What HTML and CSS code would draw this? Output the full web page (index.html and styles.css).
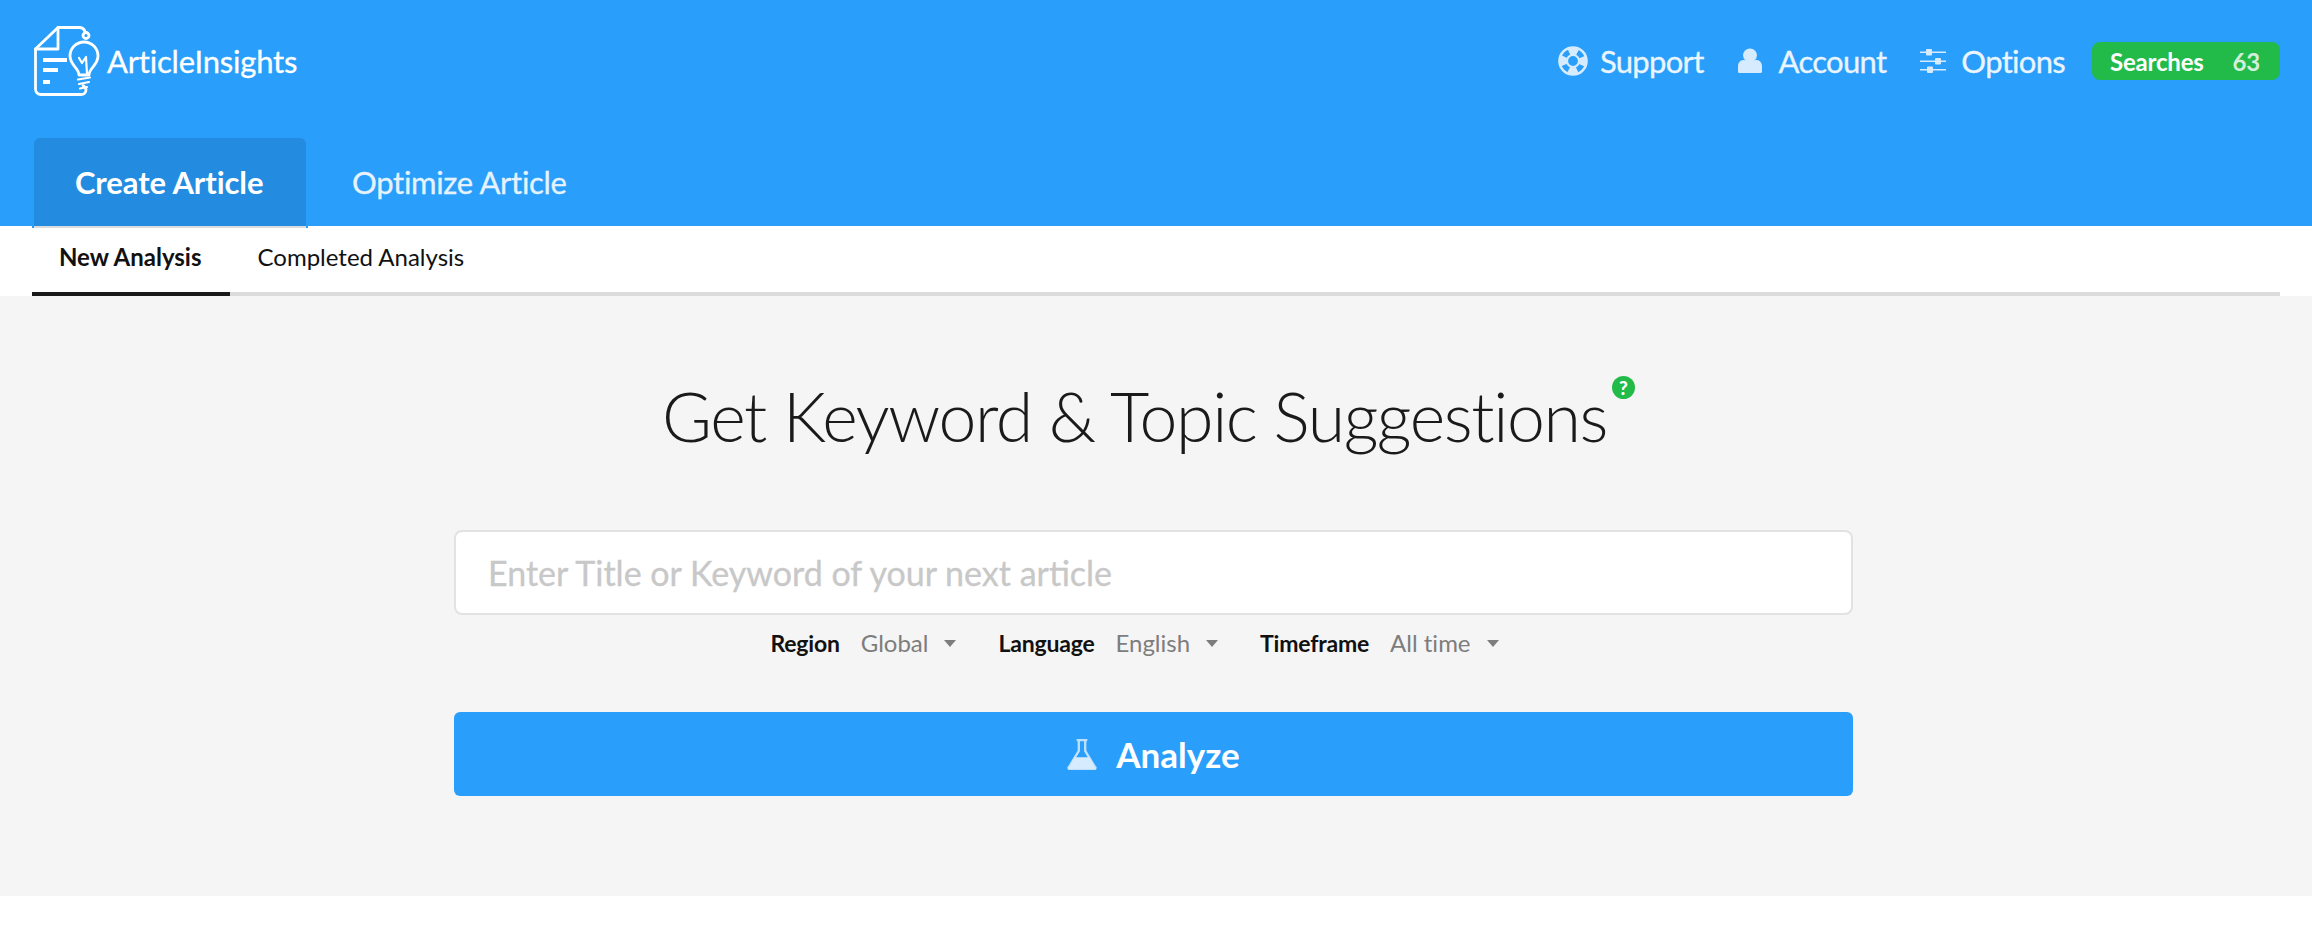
FILE: index.html
```html
<!DOCTYPE html>
<html lang="en">
<head>
    <meta charset="UTF-8">
    <title>ArticleInsights</title>
    <link rel="stylesheet" href="styles.css">
</head>
<body>

    <header class="topbar">
        <div class="topbar-row">
            <a class="logo" href="#">
                <svg class="logo-icon" viewBox="0 0 66 70" fill="none" stroke="#fff" stroke-width="2.800" stroke-linecap="round" stroke-linejoin="round">
                    <path d="M45 1.500H24L1.500 23V63a5.500 5.500 0 0 0 5.500 5.500H47c3 0 5-2 5-4.500s-1.500-3.500-3-4.500"/>
                    <path d="M24 1.500V23H1.500"/>
                    <path d="M45 1.500c3 0 5 1 6 4"/>
                    <circle cx="52" cy="9.500" r="3"/>
                    <path d="M45 49C45 42 36 39 36 30A14 14 0 0 1 64 30C64 39 55 42 55 49Z"/>
                    <path d="M44 53.500l12-2M45 58l10-2M46 62.500l7-1.500M45 32l3 5 4-6 1 17" stroke-width="2.200"/>
                    <path d="M9 34H33M9 44H24M9 56H16" stroke-width="4.200" stroke-linecap="butt"/>
                </svg>
                <span>ArticleInsights</span>
            </a>
            <nav class="top-nav">
                <a href="#">
                    <svg class="icon-support" viewBox="0 0 30 30" fill="none" stroke="#d6ebfe">
                        <circle cx="15" cy="15" r="9.500" stroke-width="8" stroke-dasharray="8.500 6.430" stroke-dashoffset="4.250"/>
                        <circle cx="15" cy="15" r="13.500" stroke-width="2.600"/>
                        <circle cx="15" cy="15" r="6" stroke-width="2.200"/>
                    </svg>
                    Support
                </a>
                <a href="#">
                    <svg class="icon-account" viewBox="0 0 26 28" fill="#d6ebfe">
                        <circle cx="13" cy="8" r="7.500"/>
                        <path d="M1 27a2 2 0 0 1-1-2v-5c0-5 3-7 7-7 2 2 10 2 12 0 4 0 7 2 7 7v5a2 2 0 0 1-1 2z"/>
                    </svg>
                    Account
                </a>
                <a href="#">
                    <svg class="icon-options" viewBox="0 0 26 24" fill="#d6ebfe">
                        <path d="M0 2.500h26v1.600H0zM0 11.500h26v1.600H0zM0 20h26v1.600H0z"/>
                        <rect x="6" y="0" width="6" height="6.500" rx="1"/>
                        <rect x="15" y="9" width="6" height="6.500" rx="1"/>
                        <rect x="7" y="17.500" width="6" height="6.500" rx="1"/>
                    </svg>
                    Options
                </a>
                <div class="searches">
                    <span class="searches-label">Searches</span>
                    <span class="searches-count">63</span>
                </div>
            </nav>
        </div>
        <div class="main-tabs">
            <a class="main-tab active" href="#">Create Article</a>
            <a class="main-tab" href="#">Optimize Article</a>
        </div>
    </header>

    <div class="sub-tabs">
        <a class="sub-tab active" href="#">New Analysis</a>
        <a class="sub-tab" href="#">Completed Analysis</a>
    </div>

    <main class="analysis">
        <h1 class="analysis-title">
            <span>Get Keyword &amp; Topic Suggestions</span>
            <span class="help-badge">?</span>
        </h1>

        <div class="analysis-form">
            <input class="keyword-input" type="text" placeholder="Enter Title or Keyword of your next article">

            <div class="filters">
                <div class="filter">
                    <b>Region</b>
                    <span class="filter-value">Global</span>
                    <i class="caret"></i>
                </div>
                <div class="filter">
                    <b>Language</b>
                    <span class="filter-value">English</span>
                    <i class="caret"></i>
                </div>
                <div class="filter">
                    <b>Timeframe</b>
                    <span class="filter-value">All time</span>
                    <i class="caret"></i>
                </div>
            </div>

            <button class="analyze-btn">
                <svg viewBox="0 0 28 30">
                    <path d="M9 2h10M11 2v10L2 27a1 1 0 0 0 1 2h22a1 1 0 0 0 1-2L17 12V2" fill="none" stroke="#bfe0fd" stroke-width="2.200"/>
                    <path d="M7 18h14l6 11H1z" fill="#d6ebfe"/>
                </svg>
                Analyze
            </button>
        </div>
    </main>

</body>
</html>
```

FILE: styles.css
```css
* {
    box-sizing: border-box;
}

body {
    font-family: 'Lato', sans-serif;
    font-variant-ligatures: none;
    margin: 0;
    background-color: #fff;
    color: #111;
}

a {
    text-decoration: none;
}

.topbar {
    background-color: #299ffb;
    height: 226px;
    padding: 0 34px;
    display: flex;
    flex-direction: column;
    justify-content: space-between;
}

.topbar-row {
    display: flex;
    justify-content: space-between;
    padding-top: 26px;
}

.logo {
    display: flex;
    align-items: center;
    gap: 7px;
    color: #fff;
    font-size: 31px;
    letter-spacing: -0.2px;
    -webkit-text-stroke: 0.3px;
    height: 70px;
}

.logo-icon {
    width: 66px;
    height: 70px;
}

.top-nav {
    display: flex;
    align-items: flex-start;
    margin-top: 16px;
    margin-right: -2px;
}

.top-nav a {
    display: flex;
    align-items: center;
    gap: 12px;
    color: #eaf5ff;
    font-size: 31px;
    letter-spacing: -0.7px;
    -webkit-text-stroke: 0.3px;
    line-height: 38px;
    margin-right: 34px;
}

.icon-support {
    width: 30px;
    height: 30px;
}

.icon-account {
    width: 24px;
    height: 26px;
    margin-right: 5px;
}

.icon-options {
    width: 26px;
    height: 24px;
    margin-right: 3px;
}

.searches {
    display: flex;
    justify-content: space-between;
    align-items: center;
    width: 188px;
    height: 38px;
    padding: 0 20px 0 18px;
    margin-left: -7px;
    background-color: #22bb4a;
    border-radius: 8px;
    font-size: 24px;
    font-weight: 700;
    letter-spacing: -0.2px;
    color: #fff;
}

.searches-count {
    color: #d3efdb;
}

.main-tabs {
    display: flex;
}

.main-tab {
    height: 88px;
    line-height: 88px;
    padding: 0 41px;
    color: #e6f3fe;
    font-size: 31px;
    letter-spacing: -0.3px;
    -webkit-text-stroke: 0.3px;
    position: relative;
}

.main-tab + .main-tab {
    padding-left: 46px;
}

.main-tab.active {
    width: 272px;
    background-color: #238ce0;
    border-radius: 6px 6px 0 0;
    color: #fff;
    font-weight: 700;
    letter-spacing: -0.1px;
    -webkit-text-stroke: 0;
    white-space: nowrap;
}

.main-tab.active::after {
    content: '';
    position: absolute;
    left: -2px;
    right: -2px;
    bottom: -2px;
    height: 2px;
    background-color: #dcdcdc;
    border-left: 2px solid #299ffb;
    border-right: 2px solid #299ffb;
}

.sub-tabs {
    display: flex;
    height: 70px;
    margin: 0 32px;
    border-bottom: 4px solid #dcdcdc;
}

.sub-tab {
    height: 70px;
    line-height: 62px;
    padding: 0 28px;
    color: #111;
    font-size: 24px;
}

.sub-tab.active {
    padding: 0 28px 0 27px;
    font-weight: 700;
    border-bottom: 4px solid #1a1a1a;
}

.analysis {
    background-color: #f5f5f5;
    height: 600px;
    padding-right: 5px;
    display: flex;
    flex-direction: column;
    align-items: center;
}

.analysis-title {
    display: flex;
    align-items: flex-start;
    margin: 80px 10px 0 0;
    font-size: 68px;
    line-height: 80px;
    font-weight: 300;
    letter-spacing: -1.4px;
    color: #1a1a1a;
}

.help-badge {
    width: 23px;
    height: 23px;
    margin: 0 0 0 5px;
    border-radius: 50%;
    background-color: #22bb4a;
    color: #fff;
    font-size: 19px;
    line-height: 23px;
    font-weight: 900;
    letter-spacing: 0;
    text-align: center;
}

.analysis-form {
    width: 1399px;
    margin-top: 74px;
}

.keyword-input {
    display: block;
    width: 100%;
    height: 85px;
    padding: 0 32px;
    border: 2px solid #e2e2e2;
    border-radius: 8px;
    background-color: #fff;
    font-family: 'Lato', sans-serif;
    font-size: 34px;
    -webkit-text-stroke: 0.3px;
    outline: none;
}

.keyword-input::placeholder {
    color: #c8c8c8;
}

.filters {
    display: flex;
    justify-content: center;
    gap: 42px;
    height: 97px;
    padding: 13px 38px 0 0;
    font-size: 23px;
    line-height: 30px;
}

.filter {
    display: flex;
    align-items: center;
    height: 30px;
}

.filter b {
    margin-right: 21px;
    letter-spacing: -0.2px;
}

.filter-value {
    color: #7d7d7d;
    font-size: 24px;
    margin-right: 16px;
}

.caret {
    width: 0;
    height: 0;
    border-left: 6px solid transparent;
    border-right: 6px solid transparent;
    border-top: 7px solid #7d7d7d;
}

.analyze-btn {
    display: flex;
    align-items: center;
    justify-content: center;
    gap: 19px;
    width: 100%;
    height: 84px;
    border: none;
    border-radius: 6px;
    background-color: #299ffb;
    color: #fff;
    font-family: 'Lato', sans-serif;
    font-size: 35px;
    font-weight: 700;
    cursor: pointer;
}

.analyze-btn svg {
    width: 30px;
    height: 32px;
}
```
